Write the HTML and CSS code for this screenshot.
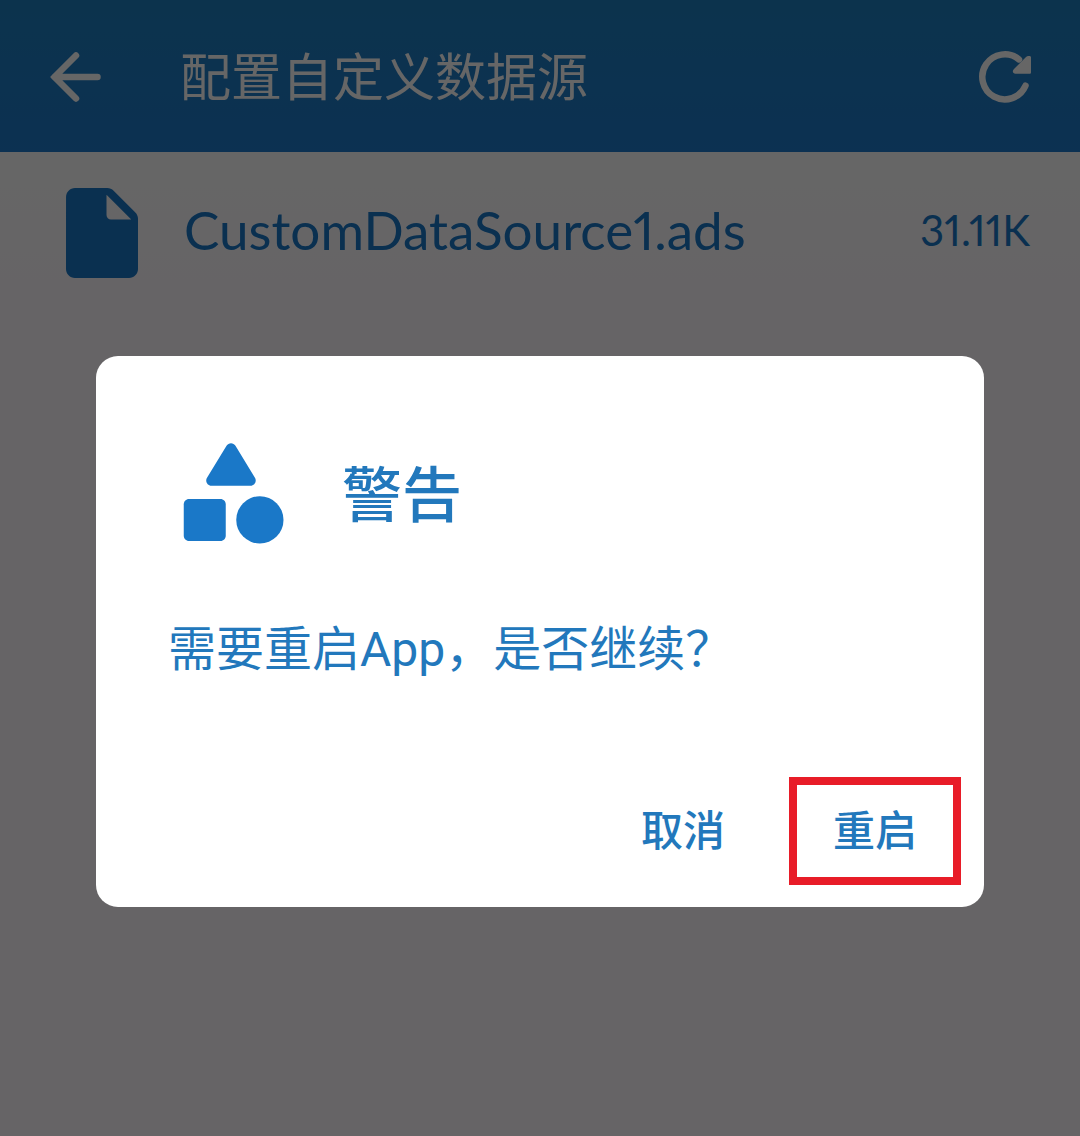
FILE: index.html
```html
<!DOCTYPE html>
<html lang="zh-CN">
<head>
<meta charset="utf-8">
<meta name="viewport" content="width=device-width, initial-scale=1">
<title>配置自定义数据源</title>
<link rel="stylesheet" href="styles.css">
</head>
<body>
<div class="screen">
  <header class="app-bar">
    <button class="icon-button" type="button" aria-label="返回">
      <svg class="icon-small" viewBox="0 0 54 54" fill="none" stroke="currentColor" stroke-width="6.5" stroke-linecap="round" aria-hidden="true">
        <path d="M28 6.500L6.500 28l21.500 21.500M8 28h41.500" stroke-linejoin="round"/>
        <path d="M2 28l7-6v12z" fill="currentColor" stroke="none"/>
      </svg>
    </button>
    <h1 class="app-title">配置自定义数据源</h1>
    <button class="icon-button" type="button" aria-label="刷新">
      <svg class="icon-small" viewBox="0 0 54 54" aria-hidden="true">
        <path d="M41 10.400A22.500 22.500 0 1 0 47.500 36.700" fill="none" stroke="currentColor" stroke-width="6.500" stroke-linecap="round"/>
        <path d="M47.500 8.500L36 20C33.700 22 35 24.700 37.500 24.700H51.500c1 0 1.500-.5 1.500-1.500V8.200C53 6.800 49.700 6.300 47.500 8.500z" fill="currentColor"/>
      </svg>
    </button>
  </header>
  <main>
    <ul class="file-list">
      <li class="file-row">
        <svg class="file-icon" viewBox="0 0 24 24" fill="currentColor" aria-hidden="true">
          <path d="M6 2c-1.100 0-1.990.9-1.990 2L4 20c0 1.100.89 2 1.990 2H18c1.100 0 2-.9 2-2V8.830c0-.53-.21-1.040-.59-1.410l-4.830-4.830c-.37-.38-.88-.59-1.410-.59H6zm7 6V3.500L18.500 9H14c-.55 0-1-.45-1-1z"/>
        </svg>
        <span class="file-name">CustomDataSource1.ads</span>
        <span class="file-size">31.11K</span>
      </li>
    </ul>
  </main>
  <div class="scrim">
    <section class="dialog" role="alertdialog" aria-modal="true" aria-labelledby="dialog-title" aria-describedby="dialog-message">
      <div class="dialog-header">
        <svg class="dialog-icon" viewBox="0 0 24 24" fill="currentColor" aria-hidden="true">
          <path d="M11.150 3.400L7.430 9.480c-.41.66.07 1.520.85 1.520h7.430c.78 0 1.260-.86.85-1.520L12.850 3.400c-.39-.64-1.310-.64-1.700 0z"/>
          <circle cx="17.500" cy="17.500" r="4.500"/>
          <path d="M4 21.500h6c.55 0 1-.45 1-1v-6c0-.55-.45-1-1-1H4c-.55 0-1 .45-1 1v6c0 .55.45 1 1 1z"/>
        </svg>
        <h2 class="dialog-title" id="dialog-title">警告</h2>
      </div>
      <p class="dialog-message" id="dialog-message">需要重启App，是否继续？</p>
      <div class="dialog-actions">
        <button class="action" type="button">取消</button>
        <button class="action action-highlighted" type="button">重启</button>
      </div>
    </section>
  </div>
</div>
</body>
</html>
```
FILE: styles.css
```css
:root {
  --blue: #1a78c8;
  --text-blue: #2278bc;
  --surface: #fffaff;
}

* {
  box-sizing: border-box;
}

body {
  margin: 0;
  background: var(--surface);
  color: var(--blue);
  font-family: Roboto, "Noto Sans CJK SC", sans-serif;
}

h1,
h2,
p,
ul {
  margin: 0;
  padding: 0;
}

button {
  margin: 0;
  padding: 0;
  border: 0;
  background: none;
  color: inherit;
  font-family: inherit;
}

svg {
  display: block;
}

.screen {
  position: relative;
  min-height: 100vh;
}

.app-bar {
  display: flex;
  align-items: center;
  gap: 78px;
  height: 152px;
  padding: 0 48px;
  background: linear-gradient(#1e80c0, #1e7dc8 60%, #207acc);
  color: #fff;
}

.icon-small {
  width: 54px;
  height: 54px;
}

.app-title {
  flex: 1;
  padding-top: 6px;
  font-size: 51px;
  font-weight: 400;
  line-height: 72px;
}

.file-list {
  list-style: none;
}

.file-row {
  display: flex;
  align-items: center;
  gap: 28px;
  height: 162px;
  padding: 0 50px 0 48px;
  background: linear-gradient(#fff, var(--surface));
  font-family: Lato, sans-serif;
  font-variant-numeric: proportional-nums;
}

.file-icon {
  width: 108px;
  height: 108px;
}

.file-name {
  flex: 1;
  padding-bottom: 6px;
  font-size: 53px;
  line-height: 64px;
}

.file-size {
  padding-bottom: 6px;
  font-size: 42px;
  line-height: 64px;
}

.scrim {
  position: absolute;
  inset: 0;
  display: flex;
  align-items: center;
  padding: 126px 96px 0;
  background: rgba(0, 0, 0, 0.6);
}

.dialog {
  flex: 1;
  padding: 72px 23px 22px;
  border-radius: 22px;
  background: #fff;
}

.dialog-header {
  display: flex;
  align-items: center;
  gap: 48px;
  padding-left: 49px;
}

.dialog-icon {
  width: 126px;
  height: 126px;
}

.dialog-title {
  padding-top: 12px;
  color: var(--text-blue);
  font-size: 60px;
  font-weight: 500;
  line-height: 80px;
}

.dialog-message {
  padding: 61px 49px 92px;
  color: var(--text-blue);
  font-size: 48px;
  line-height: 70px;
}

.dialog-actions {
  display: flex;
  justify-content: flex-end;
  gap: 20px;
}

.action {
  width: 172px;
  height: 108px;
  padding-bottom: 6px;
  color: var(--text-blue);
  font-size: 42px;
  font-weight: 500;
}

.action-highlighted {
  border: 8px solid #e81c28;
}
```
